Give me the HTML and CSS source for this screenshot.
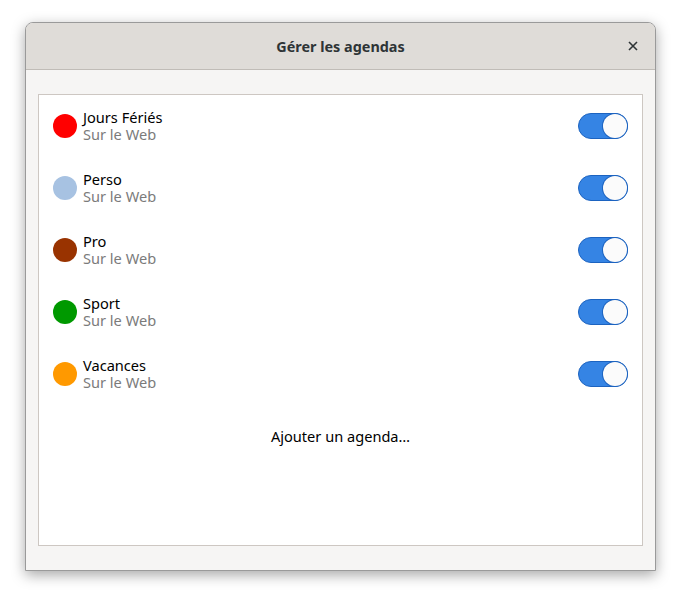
FILE: index.html
```html
<!DOCTYPE html>
<html lang="fr">
<head>
    <meta charset="UTF-8">
    <title>Gérer les agendas</title>
    <link rel="stylesheet" href="styles.css">
</head>
<body>
    <div class="dialog">
        <div class="headerbar">
            <span class="title">Gérer les agendas</span>
            <button class="close" aria-label="Fermer">
                <svg width="10" height="10" viewBox="0 0 10 10"><path d="M1 1L9 9M9 1L1 9" stroke="#2e3436" stroke-width="1.6"/></svg>
            </button>
        </div>
        <div class="content">
            <div class="listbox">
                <div class="row">
                    <span class="dot" style="background:#ff0000"></span>
                    <div class="labels"><div class="name">Jours Fériés</div><div class="sub">Sur le Web</div></div>
                    <span class="switch"><span class="knob"></span></span>
                </div>
                <div class="row">
                    <span class="dot" style="background:#a7c2e2"></span>
                    <div class="labels"><div class="name">Perso</div><div class="sub">Sur le Web</div></div>
                    <span class="switch"><span class="knob"></span></span>
                </div>
                <div class="row">
                    <span class="dot" style="background:#993300"></span>
                    <div class="labels"><div class="name">Pro</div><div class="sub">Sur le Web</div></div>
                    <span class="switch"><span class="knob"></span></span>
                </div>
                <div class="row">
                    <span class="dot" style="background:#009900"></span>
                    <div class="labels"><div class="name">Sport</div><div class="sub">Sur le Web</div></div>
                    <span class="switch"><span class="knob"></span></span>
                </div>
                <div class="row">
                    <span class="dot" style="background:#ff9900"></span>
                    <div class="labels"><div class="name">Vacances</div><div class="sub">Sur le Web</div></div>
                    <span class="switch"><span class="knob"></span></span>
                </div>
                <div class="add">Ajouter un agenda…</div>
            </div>
        </div>
    </div>
</body>
</html>
```
FILE: styles.css
```css
body { margin: 0; padding: 22px 25px; background: #fff; font-family: "Noto Sans", sans-serif; font-size: 14.6px; color: #000; }
.dialog { width: 629px; height: 547px; border: 1px solid #9a9a9a; border-radius: 8px 8px 0 0; background: #f6f5f4; display: flex; flex-direction: column; box-shadow: 0 4px 14px rgba(0,0,0,0.35); overflow: hidden; }
.headerbar { height: 46px; flex: none; background: #dfdcd8; border-bottom: 1px solid #c0bcb7; display: flex; align-items: center; justify-content: center; position: relative; }
.title { font-weight: bold; font-size: 14.4px; color: #2e3436; }
.close { position: absolute; right: 14px; top: 15px; width: 16px; height: 16px; border: none; background: none; padding: 0; display: flex; align-items: center; justify-content: center; }
.content { flex: 1; padding: 24px 12px; display: flex; }
.listbox { flex: 1; background: #fff; border: 1px solid #cdc7c2; display: flex; flex-direction: column; }
.row { height: 62px; display: flex; align-items: center; padding: 0 14px 0 14px; }
.dot { width: 24px; height: 24px; border-radius: 50%; flex: none; }
.labels { flex: 1; margin-left: 6px; line-height: 17px; }
.sub { color: #7b7b7b; }
.switch { width: 48px; height: 24px; border: 1px solid #1c63c0; border-radius: 13px; background: #3584e4; display: flex; justify-content: flex-end; flex: none; }
.knob { width: 24px; height: 24px; border-radius: 50%; background: #fbfbfb; box-shadow: 0 0 0 1px #1c63c0; }
.add { height: 62px; display: flex; align-items: center; justify-content: center; }
```
